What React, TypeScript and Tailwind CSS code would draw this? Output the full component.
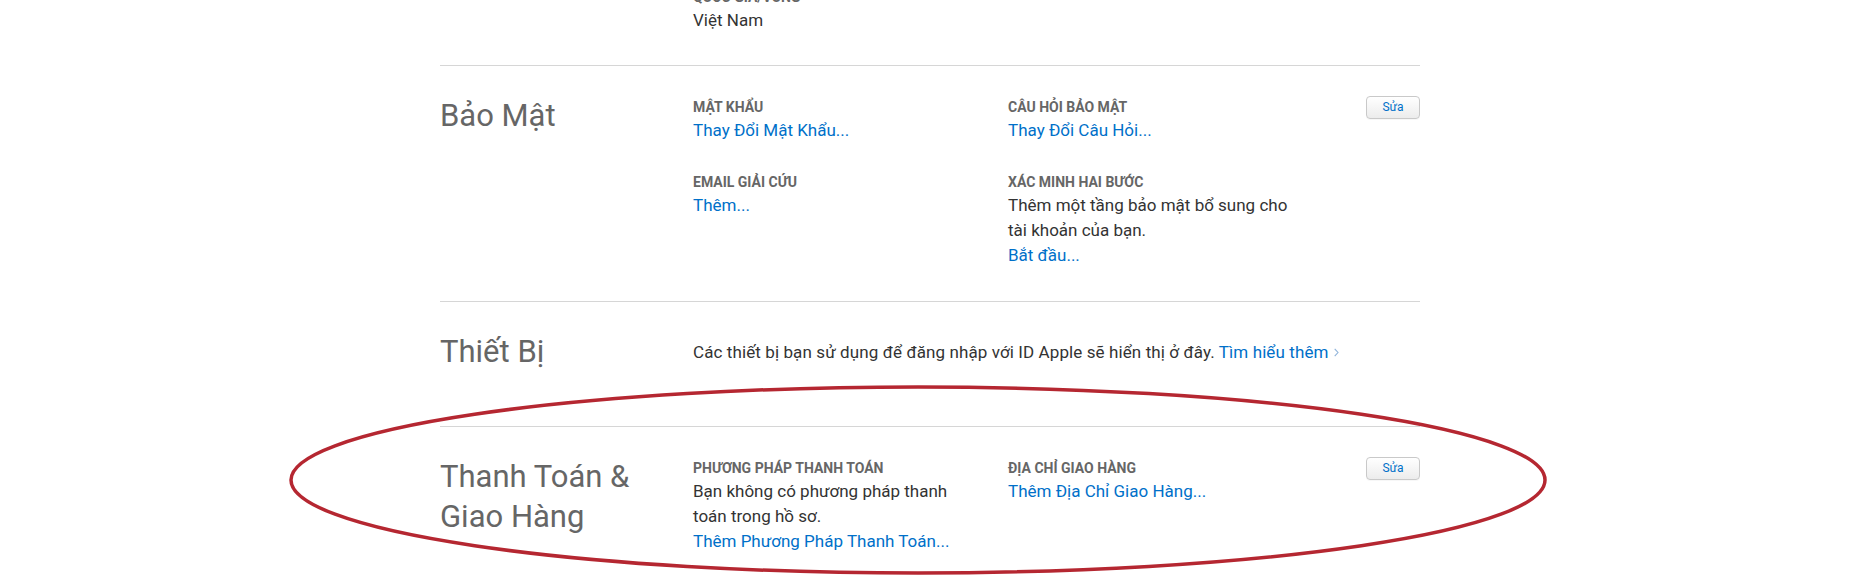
import React from "react";

const Label = ({ children }: { children: React.ReactNode }) => (
  <div className="text-[14px] leading-[22px] font-bold text-[#666666] uppercase">{children}</div>
);

const Body = ({ children, w }: { children: React.ReactNode; w: string }) => (
  <div className={`text-[17px] leading-[25px] text-[#333333] ${w}`}>{children}</div>
);

const Link = ({ children }: { children: React.ReactNode }) => (
  <div className="text-[17px] leading-[25px] text-[#0070c9]">{children}</div>
);

const EditButton = () => (
  <button className="shrink-0 w-[54px] h-[23px] rounded-[4px] border border-[#c9c9c9] bg-gradient-to-b from-white to-[#ececec] text-[12px] leading-[21px] text-[#0070c9] shadow-[0_1px_0_rgba(0,0,0,0.03)]">
    Sửa
  </button>
);

const Heading = ({ children }: { children: React.ReactNode }) => (
  <div className="w-[253px] shrink-0 pr-[50px] text-[31px] leading-[40px] font-normal text-[#666666]">
    {children}
  </div>
);

export default function App() {
  return (
    <div className="relative w-full min-h-[585px] overflow-hidden bg-white font-['Roboto','Noto_Sans',sans-serif]">
      <div className="mx-auto w-[980px] -mt-[14px]">
        {/* partial section above */}
        <section className="flex pb-[32px]">
          <div className="w-[253px] shrink-0" />
          <div>
            <Label>Quốc Gia/Vùng</Label>
            <Body w="max-w-[295px]">Việt Nam</Body>
          </div>
        </section>

        {/* Bảo Mật */}
        <section className="flex border-t border-[#d6d6d6] pt-[30px] pb-[33px]">
          <Heading>Bảo Mật</Heading>
          <div className="flex-1 grid grid-cols-[315px_1fr] gap-y-[28px]">
            <div>
              <Label>Mật Khẩu</Label>
              <Link>Thay Đổi Mật Khẩu...</Link>
            </div>
            <div>
              <Label>Câu Hỏi Bảo Mật</Label>
              <Link>Thay Đổi Câu Hỏi...</Link>
            </div>
            <div>
              <Label>Email Giải Cứu</Label>
              <Link>Thêm...</Link>
            </div>
            <div>
              <Label>Xác Minh Hai Bước</Label>
              <Body w="max-w-[295px]">Thêm một tầng bảo mật bổ sung cho tài khoản của bạn.</Body>
              <Link>Bắt đầu...</Link>
            </div>
          </div>
          <EditButton />
        </section>

        {/* Thiết Bị */}
        <section className="flex border-t border-[#d6d6d6] pt-[30px] pb-[54px]">
          <Heading>Thiết Bị</Heading>
          <div className="flex-1 pt-[8px] text-[17px] leading-[25px] tracking-[0.1px] text-[#333333]">
            Các thiết bị bạn sử dụng để đăng nhập với ID Apple sẽ hiển thị ở đây.{" "}
            <span className="text-[#0070c9]">Tìm hiểu thêm</span>
            <svg className="ml-[5px] inline-block align-[1px]" width="5" height="9" viewBox="0 0 5 9">
              <path d="M0.7 0.8 L4 4.5 L0.7 8.2" fill="none" stroke="#8fb3da" strokeWidth="1.1" />
            </svg>
          </div>
        </section>

        {/* Thanh Toán & Giao Hàng */}
        <section className="flex border-t border-[#d6d6d6] pt-[30px] pb-[30px]">
          <Heading>Thanh Toán &amp; Giao Hàng</Heading>
          <div className="flex-1 grid grid-cols-[315px_1fr]">
            <div>
              <Label>Phương Pháp Thanh Toán</Label>
              <Body w="max-w-[272px]">Bạn không có phương pháp thanh toán trong hồ sơ.</Body>
              <Link>Thêm Phương Pháp Thanh Toán...</Link>
            </div>
            <div>
              <Label>Địa Chỉ Giao Hàng</Label>
              <Link>Thêm Địa Chỉ Giao Hàng...</Link>
            </div>
          </div>
          <EditButton />
        </section>
      </div>

      {/* red annotation ellipse */}
      <svg
        className="pointer-events-none absolute left-0 top-0"
        width="1860"
        height="585"
        viewBox="0 0 1860 585"
      >
        <ellipse cx="918" cy="480" rx="627" ry="93" fill="none" stroke="#b52731" strokeWidth="3.5" />
      </svg>
    </div>
  );
}
